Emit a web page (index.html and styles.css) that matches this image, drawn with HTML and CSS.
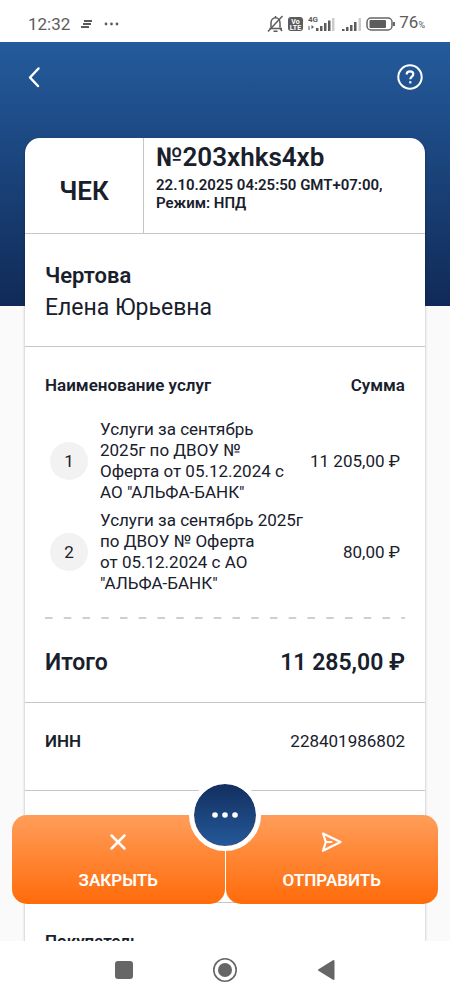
FILE: index.html
```html
<!DOCTYPE html>
<html lang="ru">
<head>
<meta charset="utf-8">
<meta name="viewport" content="width=device-width, initial-scale=1">
<title>Чек</title>
<link rel="stylesheet" href="styles.css">
</head>
<body>
<div class="status">
  <div class="status-left">
    <span>12:32</span>
    <svg width="12" height="8" viewBox="0 0 12 8" fill="none" stroke="#5c5c5c" stroke-width="2"><path d="M3 1h8M2 4h8M0 7h8"/></svg>
    <svg width="16" height="4" viewBox="0 0 16 4" fill="#5c5c5c"><circle cx="2" cy="2" r="1.400"/><circle cx="7.500" cy="2" r="1.400"/><circle cx="13" cy="2" r="1.400"/></svg>
  </div>
  <div class="status-right">
    <svg width="17" height="18" viewBox="0 0 17 18" fill="none" stroke="#5c5c5c" stroke-width="1.500"><path d="M2.500 13.500h12.500M4 12.500V8c0-3 2-5.300 4.500-5.300S13 5 13 8v4.500M8.500 1v2M15 16 12.500 13M6.500 16.200h4"/><path d="M1 16.500 15.500 1"/></svg>
    <svg width="17" height="18" viewBox="0 0 17 18"><rect x="1" y="2" width="15" height="14" rx="3" fill="#5c5c5c"/><text class="volte" x="8.500" y="8.500">Vo</text><text class="volte" x="8.500" y="14.500">LTE</text></svg>
    <svg width="29" height="18" viewBox="0 0 29 18"><text class="net" x="1" y="7">4G</text><g fill="#5c5c5c"><path d="M1.500 11h1v4h-1zM4.500 10l2.500 2-2.500 2zM9 13h2.500v3H9zM13 11h2.500v5H13zM17 8h2.500v8H17zM21 5.500h2.500V16H21z"/></g><path fill="#ccc" d="M25 3h2.500v13H25z"/></svg>
    <svg width="24" height="18" viewBox="-2 0 24 18"><path fill="#5c5c5c" d="M1 14h2.500v2H1zM5 12h2.500v4H5zM9 10h2.500v6H9zM13 7h2.500v9H13z"/><path fill="#ccc" d="M17.500 3H20v13h-2.500z"/></svg>
    <svg width="30" height="14" viewBox="0 0 30 14"><rect x="1" y="1" width="25" height="12" rx="4" fill="none" stroke="#666" stroke-width="1.500"/><rect x="3.500" y="3" width="16.500" height="8" rx="1" fill="#5c5c5c"/><path d="M28 5v4" stroke="#666" stroke-width="2"/></svg>
    <span class="level">76<small>%</small></span>
  </div>
</div>

<main class="app">
  <div class="hero">
    <button class="icon-btn" aria-label="Назад"><svg width="14" height="22" viewBox="0 0 14 22"><path d="M11.500 2.500 3 11.500 11 20" fill="none" stroke="#fff" stroke-width="2.500" stroke-linecap="round" stroke-linejoin="round"/></svg></button>
    <button class="icon-btn" aria-label="Помощь"><svg width="26" height="26" viewBox="0 0 26 26" fill="none" stroke="#fff"><circle cx="13" cy="13" r="11.700" stroke-width="2"/><path d="M9.700 10.400c0-2 1.400-3.100 3.300-3.100s3.300 1.200 3.300 2.900c0 2.500-3 2.500-3 5" stroke-width="2.200"/><path d="M12.200 18.300h2.200" stroke-width="2.200"/></svg></button>
  </div>

  <article class="card">
    <header class="head">
      <h1 class="kind">ЧЕК</h1>
      <div class="meta">
        <p class="number">№203xhks4xb</p>
        <p class="date">22.10.2025 04:25:50 GMT+07:00, Режим: НПД</p>
      </div>
    </header>
    <section class="person">
      <h2 class="surname">Чертова</h2>
      <p class="name">Елена Юрьевна</p>
    </section>
    <section class="services">
      <table class="items">
        <thead><tr><th>Наименование услуг</th><th>Сумма</th></tr></thead>
        <tbody>
          <tr><td class="index">1</td><td class="title">Услуги за сентябрь 2025г по ДВОУ № Оферта от&nbsp;05.12.2024 с АО&nbsp;<span class="org">"АЛЬФА-БАНК"</span></td><td class="sum">11 205,00 ₽</td></tr>
          <tr><td class="index">2</td><td class="title">Услуги за сентябрь 2025г по ДВОУ № Оферта от&nbsp;05.12.2024 с АО <span class="org">"АЛЬФА-БАНК"</span></td><td class="sum">80,00 ₽</td></tr>
        </tbody>
      </table>
      <svg class="dashes" viewBox="0 0 96 2" preserveAspectRatio="none"><path d="M0 1h96" stroke="#cfcfcf" stroke-width="2" stroke-dasharray="2 3"/></svg>
      <div class="total"><span class="total-label">Итого</span><span>11 285,00 ₽</span></div>
    </section>
    <section class="inn"><b>ИНН</b><span>228401986802</span></section>
    <section class="blank"></section>
    <section class="buyer"><b>Покупатель</b></section>
  </article>

  <div class="actions">
    <button class="action"><svg width="24" height="24" viewBox="0 0 24 24"><path d="M5.500 5.500l13 13M18.500 5.500l-13 13" stroke="#fff" stroke-width="2.500" stroke-linecap="round"/></svg>ЗАКРЫТЬ</button>
    <button class="action"><svg width="24" height="24" viewBox="0 0 24 24" fill="none" stroke="#fff" stroke-width="2.200" stroke-linejoin="round" stroke-linecap="round"><path d="M3 3.500 20.500 12 3 20.800 5.800 12z"/><path d="M6 12H11.500"/></svg>ОТПРАВИТЬ</button>
    <button class="more" aria-label="Ещё"><svg width="28" height="8" viewBox="0 0 28 8" fill="#fff"><circle cx="4" cy="4" r="2.800"/><circle cx="14" cy="4" r="2.800"/><circle cx="24" cy="4" r="2.800"/></svg></button>
  </div>
</main>

<nav class="sysnav">
  <button class="icon-btn" aria-label="Недавние"><svg width="26" height="26" viewBox="0 0 26 26"><rect x="4" y="4" width="18" height="18" rx="3" fill="#666"/></svg></button>
  <button class="icon-btn" aria-label="Домой"><svg width="26" height="26" viewBox="0 0 26 26"><circle cx="13" cy="13" r="11.200" fill="none" stroke="#666" stroke-width="1.600"/><circle cx="13" cy="13" r="7" fill="#666"/></svg></button>
  <button class="icon-btn" aria-label="Назад"><svg width="26" height="26" viewBox="0 0 26 26"><path d="M6 13 20.500 4v18z" fill="#666" stroke="#666" stroke-width="2" stroke-linejoin="round"/></svg></button>
</nav>
</body>
</html>
```
FILE: styles.css
```css
* { box-sizing: border-box; }
body {
  margin: 0;
  height: 100vh;
  display: flex;
  flex-direction: column;
  background: #fff;
  color: #18202c;
  font: 17px/21px Roboto, "Noto Sans", sans-serif;
}
h1, h2, p { margin: 0; }
svg { display: block; }
button { border: 0; padding: 0; background: none; font: inherit; cursor: pointer; }

.status {
  flex: none;
  display: flex;
  justify-content: space-between;
  height: 42px;
  padding: 6px 25px 0 28px;
  color: #5c5c5c;
}
.status-left, .status-right { display: flex; align-items: center; }
.status-left { gap: 11px; }
.status-right { gap: 3px; }
.level { display: flex; align-items: baseline; }
.status small { font-size: 9px; }
.volte { font: bold 7px/1 Roboto, sans-serif; fill: #fff; text-anchor: middle; }
.net { font: bold 8px/1 Roboto, sans-serif; fill: #5c5c5c; }

.app {
  flex: 1;
  min-height: 0;
  position: relative;
  overflow: hidden;
  background: #fafafa;
}
.hero {
  display: flex;
  justify-content: space-between;
  align-items: flex-start;
  height: 264px;
  padding: 22px 27px;
  margin-bottom: -168px;
  background: linear-gradient(#245b9c, #102a57);
}
.hero .icon-btn { height: 26px; display: flex; align-items: center; }

.card {
  position: relative;
  margin: 0 25px;
  background: #fff;
  border-radius: 15px 15px 0 0;
  box-shadow: 0 1px 3px rgba(0, 0, 0, .3);
}
.card > :not(:last-child) { border-bottom: 1px solid #c6c6c6; }
.head { display: flex; height: 96px; }
.kind {
  display: flex;
  align-items: center;
  justify-content: center;
  width: 119px;
  padding-top: 10px;
  border-right: 1px solid #c6c6c6;
  font-size: 26px;
  line-height: 32px;
  font-weight: 600;
}
.meta { flex: 1; padding: 3px 12px; font-weight: 600; }
.number { font-size: 26px; line-height: 32px; }
.date { padding-top: 3px; font-size: 15px; line-height: 18px; }
.person { padding: 26px 20px 22px; font-size: 23px; line-height: 32px; }
.surname { font-size: 22px; line-height: 32px; font-weight: 600; }
.services { padding: 28px 20px 23px; }
.items, .items thead, .items tbody { display: block; }
.items tr { display: flex; align-items: center; justify-content: space-between; }
.items th, .items td { padding: 0; }
.items th { font-weight: 600; }
.items tbody { padding: 23px 5px 0; }
.items tbody tr { margin-bottom: 7px; }
.index {
  flex: none;
  width: 38px;
  line-height: 38px;
  margin-right: 12px;
  border-radius: 50%;
  background: #f2f2f2;
  text-align: center;
}
.title { flex: 1; margin-right: 20px; }
.org, .sum { white-space: nowrap; }
.dashes { width: 100%; height: 2px; margin: 23px 0 28px; }
.total { display: flex; justify-content: space-between; font-size: 23px; line-height: 32px; font-weight: 600; }
.total-label { font-size: 23px; }
.inn { display: flex; justify-content: space-between; padding: 28px 20px 38px; }
.inn b, .buyer b { font-weight: 600; }
.blank { height: 112px; }
.buyer { padding: 28px 20px 60px; }

.actions {
  position: absolute;
  right: 12px;
  bottom: 37px;
  left: 12px;
  display: flex;
  gap: 1px;
}
.action {
  flex: 1;
  display: flex;
  flex-direction: column;
  align-items: center;
  gap: 16px;
  padding: 15px 0 13px;
  border-radius: 15px;
  background: linear-gradient(#ff9e5a, #ff6b0a);
  color: #fff;
  font-weight: 600;
}
.action:first-child { border-top-right-radius: 0; }
.action:nth-child(2) { border-top-left-radius: 0; }
.more {
  position: absolute;
  top: -36px;
  left: calc(50% - 36px);
  width: 72px;
  height: 72px;
  display: flex;
  align-items: center;
  justify-content: center;
  border: 5px solid #fff;
  border-radius: 50%;
  background: linear-gradient(#122f5f, #24599a) padding-box;
}

.sysnav {
  flex: none;
  display: flex;
  justify-content: center;
  gap: 75px;
  height: 59px;
  padding-top: 16px;
}
.sysnav .icon-btn { height: 26px; }
```
